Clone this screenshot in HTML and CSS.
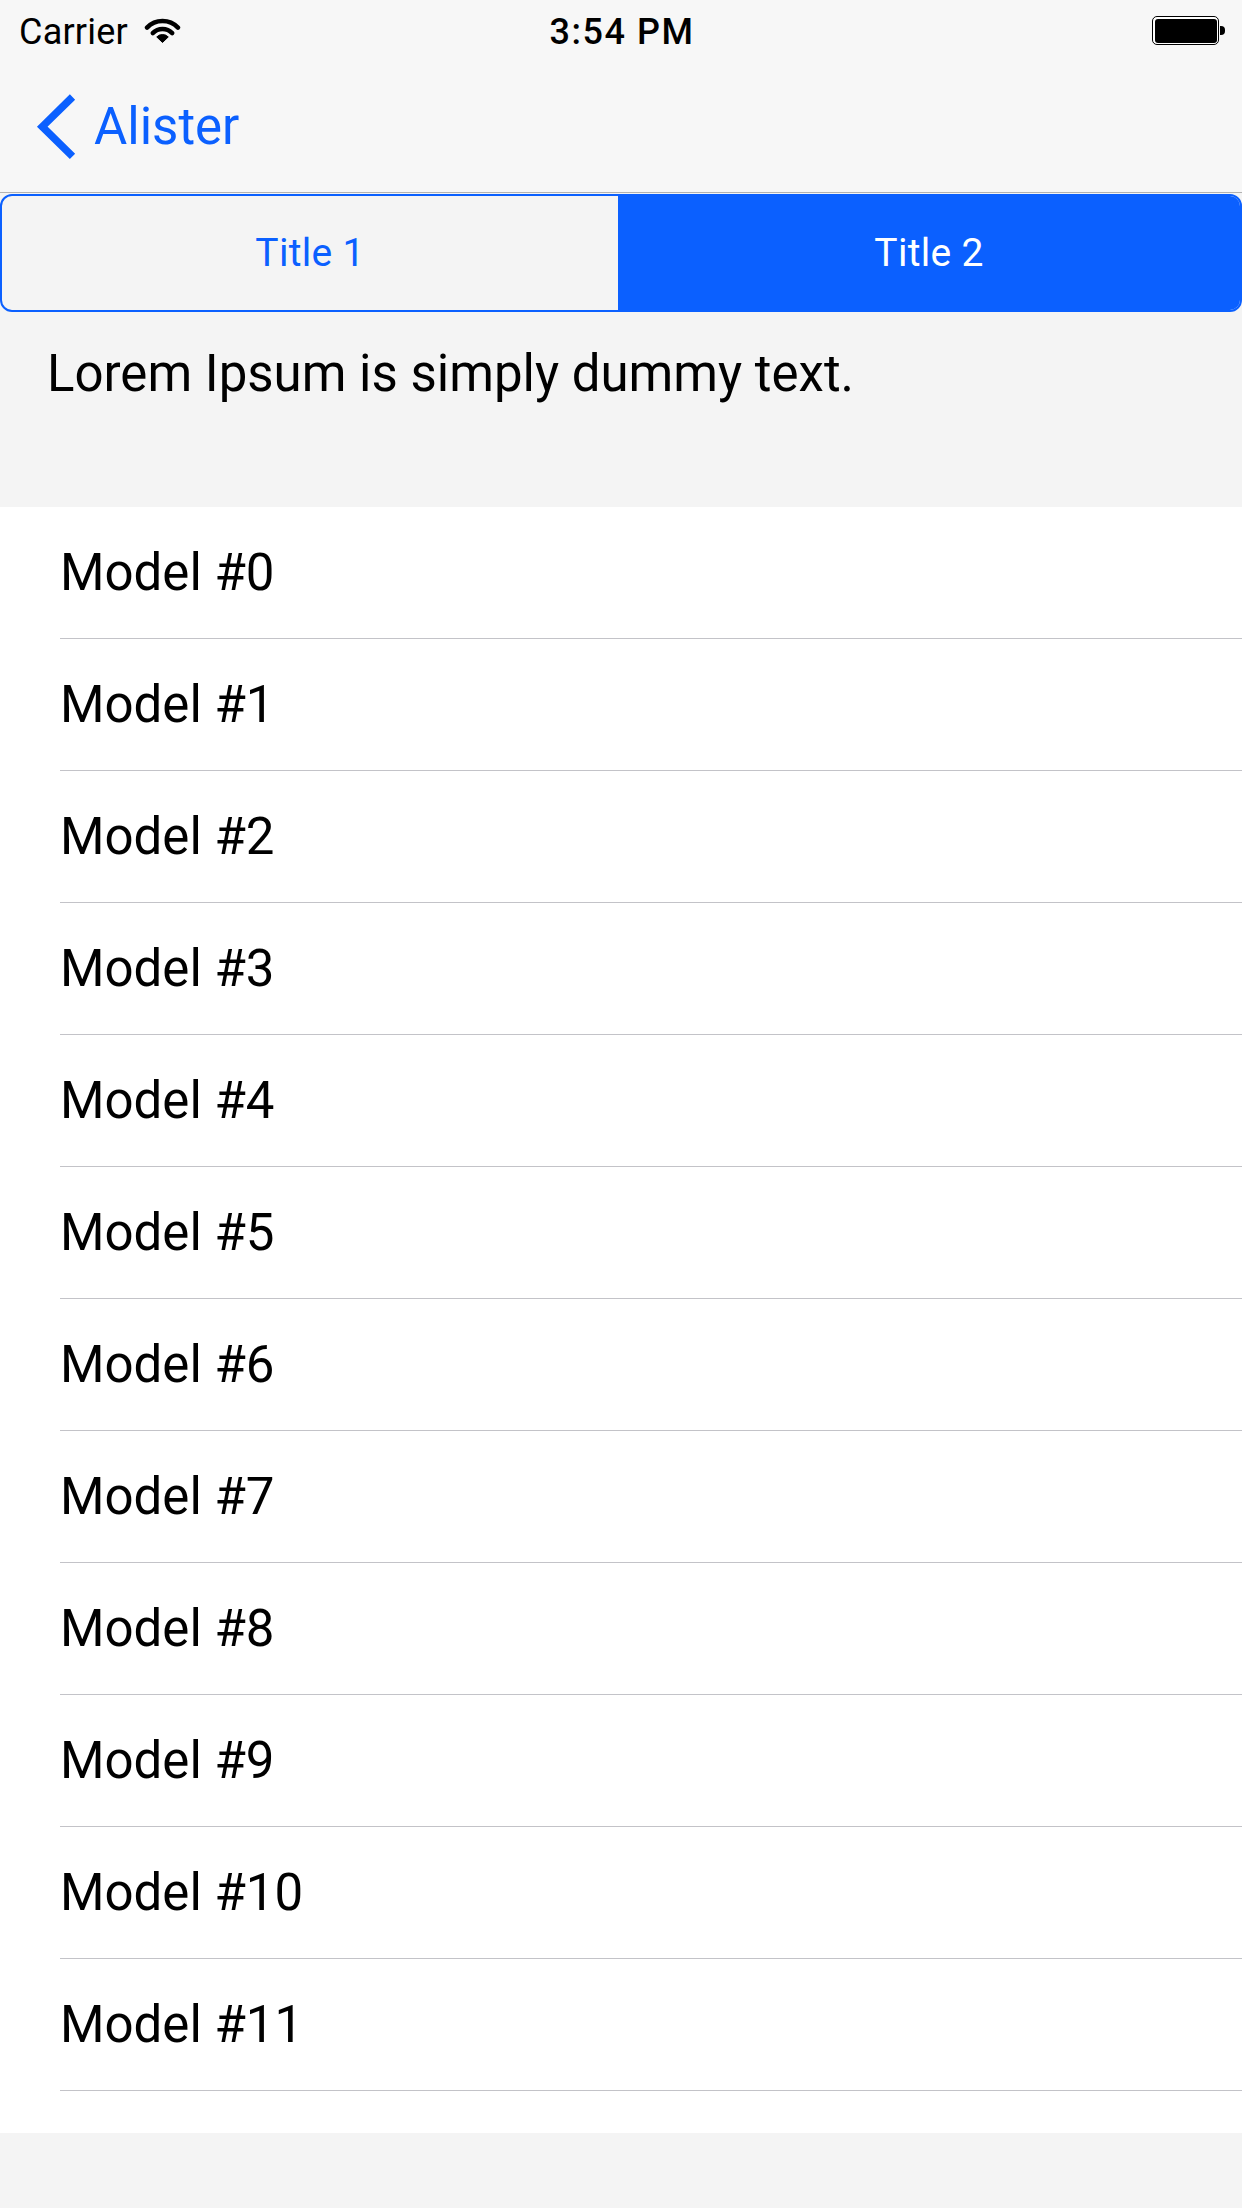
FILE: index.html
```html
<!DOCTYPE html>
<html>
<head>
<meta charset="utf-8">
<link rel="stylesheet" href="styles.css">
</head>
<body>
<div class="screen">
  <div class="statusbar">
    <div class="sb-left">
      <span class="carrier">Carrier</span>
      <svg class="wifi" viewBox="0 0 37 25" width="37" height="25">
        <path d="M3.03 9.57 A21.5 21.5 0 0 1 33.97 9.57" fill="none" stroke="#000" stroke-width="4.5" stroke-linecap="round"/>
        <path d="M8.79 15.12 A13.5 13.5 0 0 1 28.21 15.12" fill="none" stroke="#000" stroke-width="4.5" stroke-linecap="round"/>
        <path d="M18.5 24.5 L12.75 18.94 A8 8 0 0 1 24.25 18.94 Z" fill="#000" stroke="#000" stroke-width="1" stroke-linejoin="round"/>
      </svg>
    </div>
    <div class="sb-time">3:54 PM</div>
    <div class="sb-right">
      <div class="battery"><div class="battery-fill"></div></div>
      <div class="battery-nub"></div>
    </div>
  </div>
  <div class="navbar">
    <div class="back">
      <svg class="chevron" viewBox="0 0 44 68" width="44" height="68">
        <polyline points="39.5,4 9.3,33.7 39.5,63.4" fill="none" stroke="#0b60ff" stroke-width="7.5" stroke-linejoin="miter" stroke-miterlimit="4"/>
      </svg>
      <span class="back-label">Alister</span>
    </div>
  </div>
  <div class="segmented">
    <div class="seg">Title 1</div>
    <div class="seg seg-active">Title 2</div>
  </div>
  <div class="header">
    <p class="header-text">Lorem Ipsum is simply dummy text.</p>
  </div>
  <div class="list">
    <div class="row"><span class="row-label">Model #0</span></div>
    <div class="row"><span class="row-label">Model #1</span></div>
    <div class="row"><span class="row-label">Model #2</span></div>
    <div class="row"><span class="row-label">Model #3</span></div>
    <div class="row"><span class="row-label">Model #4</span></div>
    <div class="row"><span class="row-label">Model #5</span></div>
    <div class="row"><span class="row-label">Model #6</span></div>
    <div class="row"><span class="row-label">Model #7</span></div>
    <div class="row"><span class="row-label">Model #8</span></div>
    <div class="row"><span class="row-label">Model #9</span></div>
    <div class="row"><span class="row-label">Model #10</span></div>
    <div class="row"><span class="row-label">Model #11</span></div>
    <div class="list-footer"></div>
  </div>
</div>
</body>
</html>
```

FILE: styles.css
```css
* { box-sizing: border-box; }
html, body {
  margin: 0;
  padding: 0;
  background: #f4f4f4;
  font-family: Roboto, "Liberation Sans", sans-serif;
}
.screen {
  width: 1242px;
  min-height: 2208px;
  background: #f4f4f4;
  display: flex;
  flex-direction: column;
}
.statusbar {
  height: 60px;
  background: #f7f7f7;
  display: flex;
  align-items: center;
  justify-content: space-between;
  padding: 4px 17px 0 19px;
}
.sb-left {
  display: flex;
  align-items: center;
  gap: 16px;
  width: 300px;
}
.carrier {
  font-size: 36px;
  color: #000;
  letter-spacing: 0.2px;
}
.wifi { display: block; margin-top: -4px; }
.sb-time {
  font-size: 36px;
  font-weight: 500;
  color: #000;
  letter-spacing: 1.5px;
}
.sb-right {
  width: 300px;
  display: flex;
  justify-content: flex-end;
  align-items: center;
  margin-top: -3px;
}
.battery {
  width: 67px;
  height: 29px;
  border: 1px solid #000;
  border-radius: 5px;
  padding: 1.5px;
  background: #fff;
}
.battery-fill {
  width: 100%;
  height: 100%;
  background: #000;
  border-radius: 3px;
}
.battery-nub {
  width: 5px;
  height: 9px;
  margin-left: 1px;
  background: #000;
  border-radius: 0 4px 4px 0;
}
.navbar {
  height: 133px;
  background: #f7f7f7;
  border-bottom: 1px solid #b2b2b2;
  display: flex;
  align-items: center;
  padding-left: 33px;
}
.back {
  display: flex;
  align-items: center;
  gap: 17px;
  color: #0b60ff;
}
.chevron { display: block; margin-top: 2px; }
.back-label {
  font-size: 51px;
  letter-spacing: 0;
}
.segmented {
  margin-top: 1px;
  height: 118px;
  display: grid;
  grid-template-columns: 616fr 622fr;
  border: 2px solid #0b60ff;
  border-radius: 12px;
  overflow: hidden;
  background: #f4f4f4;
}
.seg {
  display: flex;
  align-items: center;
  justify-content: center;
  font-size: 39px;
  color: #0b60ff;
  letter-spacing: 0.3px;
}
.seg-active {
  background: #0b60ff;
  color: #fff;
}
.header {
  height: 195px;
  background: #f4f4f4;
  padding: 32px 0 0 47px;
}
.header-text {
  margin: 0;
  font-size: 51px;
  color: #000;
  letter-spacing: 0;
}
.list {
  background: #fff;
  padding-left: 60px;
}
.row {
  height: 132px;
  border-bottom: 1px solid #c3c3c8;
  display: flex;
  align-items: center;
}
.row-label {
  font-size: 51px;
  color: #000;
  letter-spacing: 0;
}
.list-footer {
  height: 42px;
}
```
